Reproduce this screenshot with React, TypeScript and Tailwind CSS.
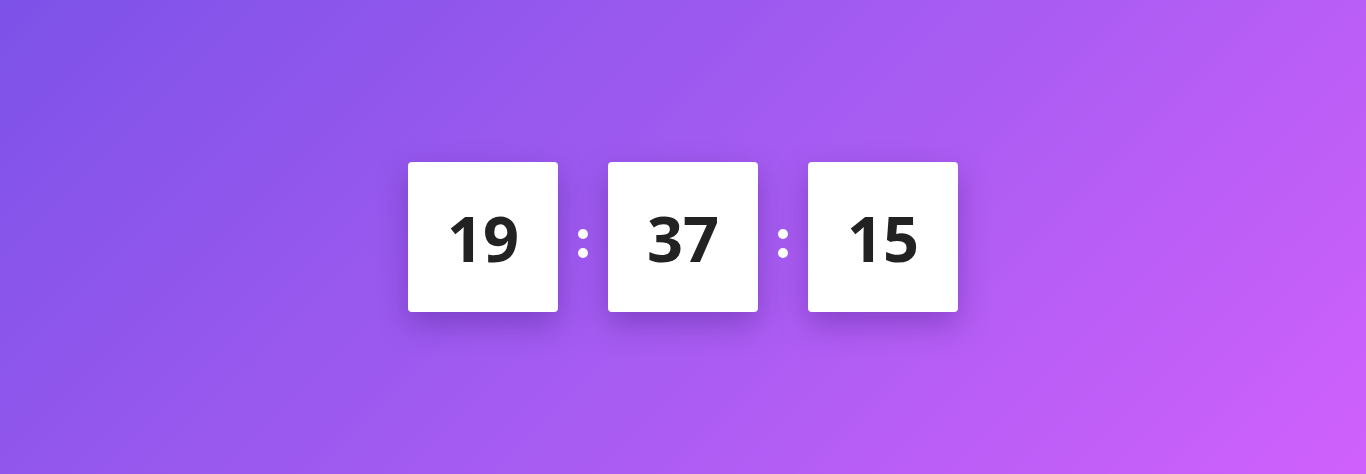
const parts = ["19", "37", "15"];

function TimeBox({ value }: { value: string }) {
  return (
    <div className="flex h-[150px] w-[150px] items-center justify-center rounded-[4px] bg-white shadow-[0_12px_30px_rgba(60,20,120,0.35)]">
      <span className="text-[63px] font-bold leading-none text-[#222222]">{value}</span>
    </div>
  );
}

function Colon() {
  return (
    <div className="mt-[12px] flex w-[50px] flex-col items-center gap-[9px]">
      <span className="h-[10px] w-[10px] rounded-full bg-white" />
      <span className="h-[10px] w-[10px] rounded-full bg-white" />
    </div>
  );
}

export default function App() {
  return (
    <div
      className="flex h-[474px] w-full items-center justify-center bg-[linear-gradient(135deg,#7d52e8_0%,#a85cf2_55%,#d060fc_100%)]"
      style={{ fontFamily: '"Open Sans", sans-serif' }}
    >
      <div className="flex items-center">
        {parts.map((p, i) => (
          <div key={i} className="flex items-center">
            {i > 0 && <Colon />}
            <TimeBox value={p} />
          </div>
        ))}
      </div>
    </div>
  );
}
